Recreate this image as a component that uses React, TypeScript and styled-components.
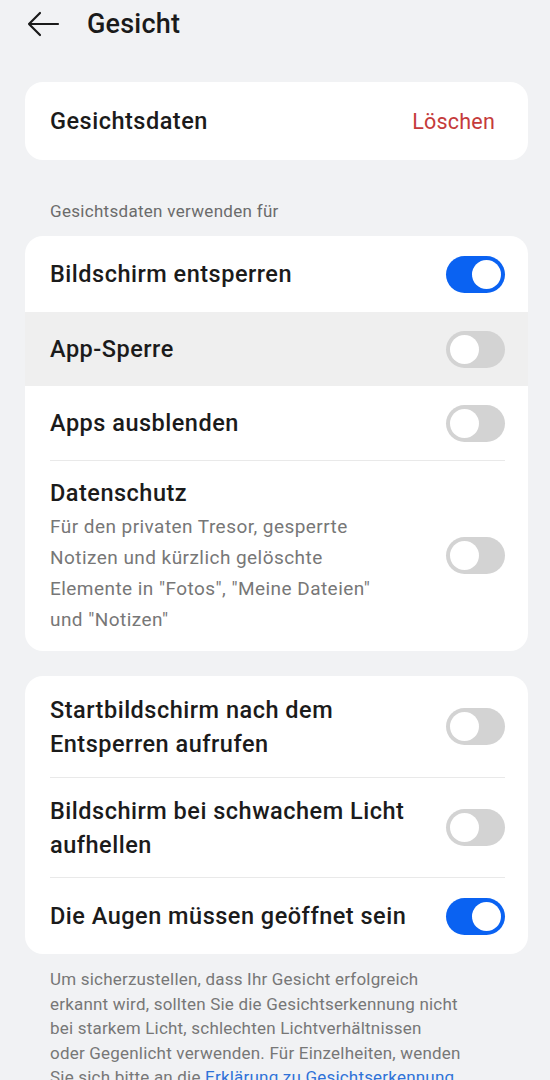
import React from "react";
import styled, { createGlobalStyle } from "styled-components";

const GlobalStyle = createGlobalStyle`
  html, body {
    margin: 0;
    padding: 0;
    background: #f1f2f4;
    font-family: Roboto, "Noto Sans", "Liberation Sans", sans-serif;
    -webkit-font-smoothing: antialiased;
  }
  body {
    height: 1080px;
    overflow: hidden;
  }
`;

const Page = styled.div`
  width: 550px;
  display: flex;
  flex-direction: column;
`;

const Header = styled.header`
  height: 47px;
  display: flex;
  align-items: center;
  padding-left: 26px;
  gap: 27px;
`;

const BackButton = styled.button`
  border: 0;
  background: none;
  padding: 0;
  width: 34px;
  height: 26px;
  display: flex;
  align-items: center;
  color: #1a1a1a;
`;

const Title = styled.h1`
  margin: 0;
  font-size: 27px;
  font-weight: 500;
  color: #1a1a1a;
  letter-spacing: 0.2px;
`;

const Content = styled.main`
  display: flex;
  flex-direction: column;
  padding: 35px 22px 0 25px;
`;

const Card = styled.section<{ $gap?: number }>`
  background: #ffffff;
  border-radius: 18px;
  overflow: hidden;
  margin-bottom: ${(p) => p.$gap ?? 0}px;
`;

const SectionLabel = styled.div`
  font-size: 17px;
  letter-spacing: 0.3px;
  color: #6b6b6b;
  padding: 0 0 14px 25px;
  line-height: 22px;
`;

const Row = styled.div<{ $h?: number; $pressed?: boolean; $top?: number; $bottom?: number }>`
  display: flex;
  align-items: center;
  min-height: ${(p) => p.$h ?? 74}px;
  padding: ${(p) => p.$top ?? 0}px 23px ${(p) => p.$bottom ?? 0}px 25px;
  box-sizing: border-box;
  background: ${(p) => (p.$pressed ? "#efefef" : "transparent")};
`;

const Divider = styled.div`
  height: 1px;
  background: #e9e9e9;
  margin: 0 23px 0 25px;
`;

const Texts = styled.div`
  flex: 1;
  display: flex;
  flex-direction: column;
  padding-right: 20px;
`;

const Label = styled.div`
  font-size: 23.5px;
  font-weight: 500;
  letter-spacing: 0.5px;
  color: #1b1b1b;
  line-height: 34px;
`;

const Desc = styled.div`
  max-width: 355px;
  font-size: 19px;
  letter-spacing: 0.45px;
  color: #777777;
  line-height: 31px;
  margin-top: 1px;
`;

const Action = styled.span`
  font-size: 21.5px;
  letter-spacing: 0.2px;
  color: #c53b3b;
  margin-right: 10px;
`;

const Track = styled.div<{ $on: boolean }>`
  width: 59px;
  height: 37px;
  border-radius: 19px;
  background: ${(p) => (p.$on ? "#0a62f2" : "#d3d3d3")};
  display: flex;
  align-items: center;
  justify-content: ${(p) => (p.$on ? "flex-end" : "flex-start")};
  padding: 0 4px;
  box-sizing: border-box;
  flex-shrink: 0;
`;

const Knob = styled.div`
  width: 29px;
  height: 29px;
  border-radius: 50%;
  background: #ffffff;
`;

const Footer = styled.p`
  margin: 0;
  padding: 13px 0 0 25px;
  font-size: 17px;
  letter-spacing: 0.2px;
  line-height: 24.5px;
  color: #777777;
  white-space: nowrap;
`;

const FooterLink = styled.span`
  color: #2f72d8;
`;

const Toggle = ({ on }: { on: boolean }) => (
  <Track $on={on}>
    <Knob />
  </Track>
);

const BackArrow = () => (
  <svg width="34" height="26" viewBox="0 0 34 26" fill="none">
    <path
      d="M32 13H3M14 2L3 13l11 11"
      stroke="#1a1a1a"
      strokeWidth="2.2"
      strokeLinecap="round"
      strokeLinejoin="round"
    />
  </svg>
);

export default function App() {
  return (
    <Page>
      <GlobalStyle />
      <Header>
        <BackButton aria-label="Zurück">
          <BackArrow />
        </BackButton>
        <Title>Gesicht</Title>
      </Header>

      <Content>
        <Card $gap={40}>
          <Row $h={78}>
            <Texts>
              <Label>Gesichtsdaten</Label>
            </Texts>
            <Action>Löschen</Action>
          </Row>
        </Card>

        <SectionLabel>Gesichtsdaten verwenden für</SectionLabel>

        <Card $gap={25}>
          <Row $h={76}>
            <Texts>
              <Label>Bildschirm entsperren</Label>
            </Texts>
            <Toggle on />
          </Row>
          <Row $pressed>
            <Texts>
              <Label>App-Sperre</Label>
            </Texts>
            <Toggle on={false} />
          </Row>
          <Row>
            <Texts>
              <Label>Apps ausblenden</Label>
            </Texts>
            <Toggle on={false} />
          </Row>
          <Divider />
          <Row $top={15} $bottom={16}>
            <Texts>
              <Label>Datenschutz</Label>
              <Desc>
                Für den privaten Tresor, gesperrte Notizen und kürzlich gelöschte
                Elemente in "Fotos", "Meine Dateien" und "Notizen"
              </Desc>
            </Texts>
            <Toggle on={false} />
          </Row>
        </Card>

        <Card>
          <Row $h={101}>
            <Texts>
              <Label>
                Startbildschirm nach dem
                <br />
                Entsperren aufrufen
              </Label>
            </Texts>
            <Toggle on={false} />
          </Row>
          <Divider />
          <Row $h={99}>
            <Texts>
              <Label>
                Bildschirm bei schwachem Licht
                <br />
                aufhellen
              </Label>
            </Texts>
            <Toggle on={false} />
          </Row>
          <Divider />
          <Row $h={76}>
            <Texts>
              <Label>Die Augen müssen geöffnet sein</Label>
            </Texts>
            <Toggle on />
          </Row>
        </Card>

        <Footer>
          Um sicherzustellen, dass Ihr Gesicht erfolgreich
          <br />
          erkannt wird, sollten Sie die Gesichtserkennung nicht
          <br />
          bei starkem Licht, schlechten Lichtverhältnissen
          <br />
          oder Gegenlicht verwenden. Für Einzelheiten, wenden
          <br />
          Sie sich bitte an die <FooterLink>Erklärung zu Gesichtserkennung</FooterLink>
        </Footer>
      </Content>
    </Page>
  );
}
